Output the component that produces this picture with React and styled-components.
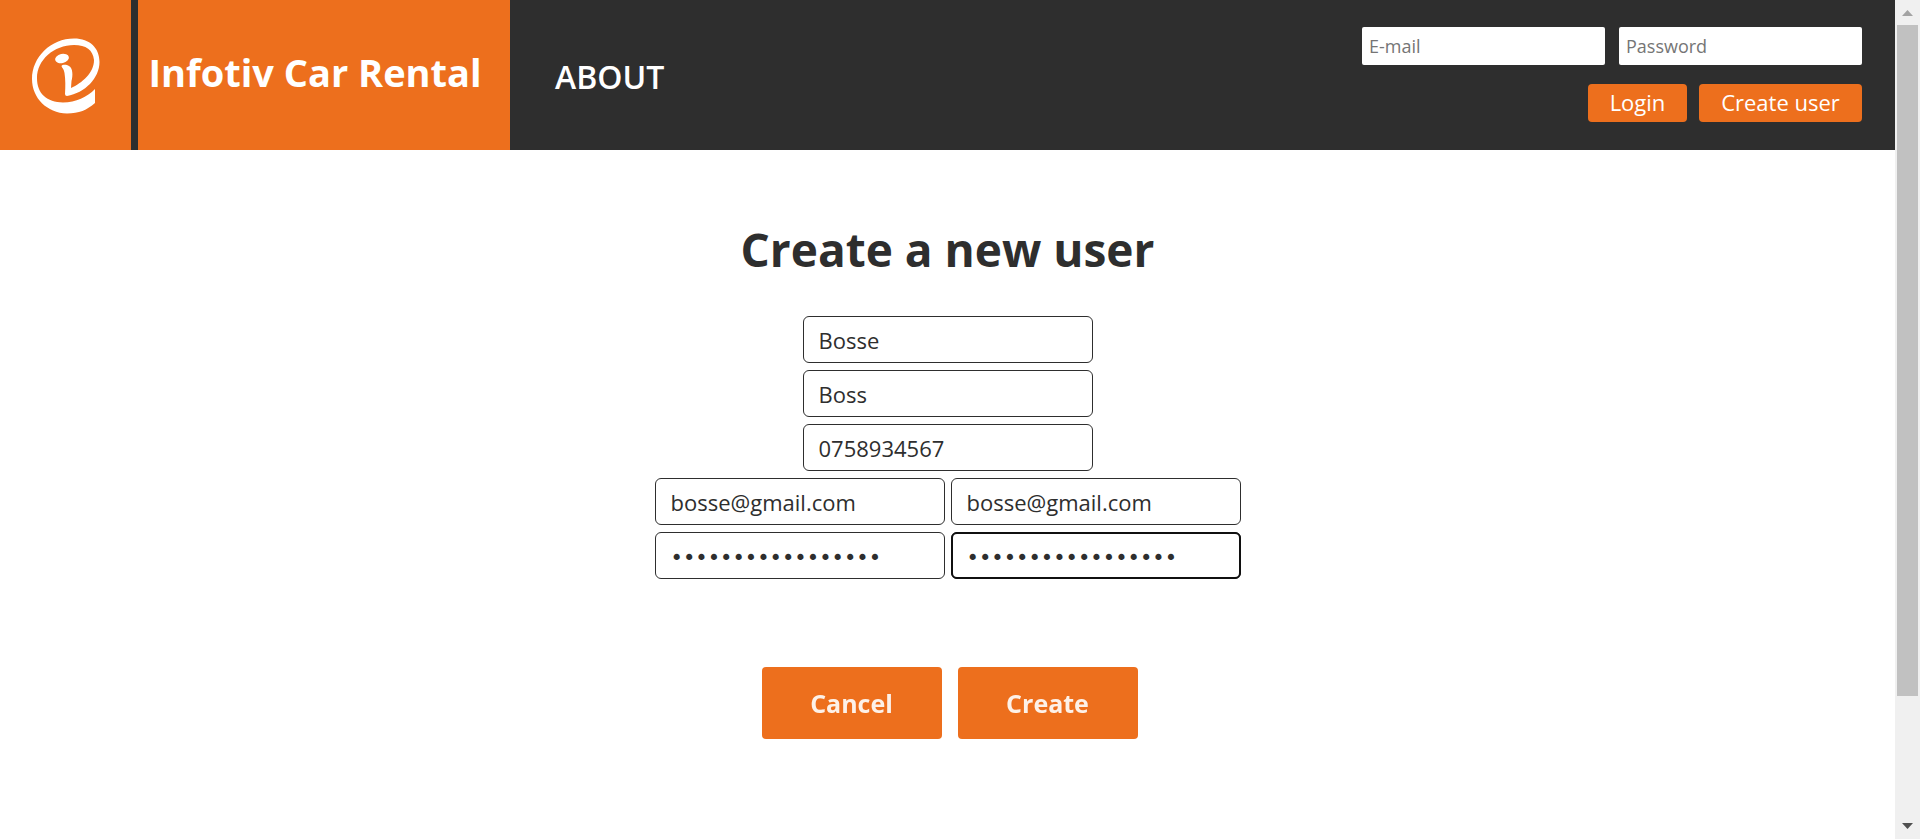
import React from "react";
import styled, { createGlobalStyle, css } from "styled-components";

const orange = "#ed6f1d";
const dark = "#2e2e2e";

const GlobalStyle = createGlobalStyle`
  *, *::before, *::after { box-sizing: border-box; }
  body {
    margin: 0;
    background: #fff;
    color: ${dark};
    font-family: "Trebuchet MS", "Open Sans", sans-serif;
  }
  button, input { font-family: inherit; }
`;

const Shell = styled.div`
  display: flex;
  min-height: 100vh;
`;

const Page = styled.div`
  flex: 1;
  min-width: 0;
`;

const Header = styled.header`
  display: flex;
  align-items: stretch;
  min-height: 150px;
  background: ${dark};
  color: #fff;
`;

const LogoLink = styled.a`
  display: flex;
  width: 131px;
  margin-right: 7px;
  background: ${orange};
`;

const Brand = styled.h1`
  display: flex;
  align-items: center;
  justify-content: center;
  width: 372px;
  margin: 0;
  padding: 0 18px 6px 0;
  background: ${orange};
  font-size: 38px;
  font-weight: 700;
  line-height: 48px;
  white-space: nowrap;
`;

const NavLink = styled.a`
  align-self: center;
  margin-left: 45px;
  padding-top: 4px;
  color: #fff;
  font-size: 32px;
  font-weight: 600;
  line-height: 40px;
  text-decoration: none;
`;

const LoginForm = styled.form`
  display: flex;
  flex-direction: column;
  align-items: flex-end;
  gap: 19px;
  margin-left: auto;
  padding: 27px 33px 0 0;
`;

const FieldRow = styled.div`
  display: flex;
  gap: ${(p) => p.$gap}px;
`;

const LoginInput = styled.input`
  width: 243px;
  height: 38px;
  padding: 0 7px;
  border: 0;
  border-radius: 2px;
  font-size: 18px;
  &::placeholder { color: #757575; }
`;

const button = css`
  border: 0;
  border-radius: 4px;
  background: ${orange};
  cursor: pointer;
`;

const SmallButton = styled.button`
  ${button}
  width: ${(p) => p.$width}px;
  height: 38px;
  padding: 0 0 2px;
  color: #fff;
  font-size: 22px;
  font-weight: 500;
`;

const Main = styled.main`
  padding: 69px 0 99px;
`;

const Title = styled.h2`
  margin: 0 0 37px;
  font-size: 46px;
  font-weight: 700;
  line-height: 60px;
  text-align: center;
`;

const UserForm = styled.form`
  display: flex;
  flex-direction: column;
  align-items: center;
  gap: 7px;
`;

const TextInput = styled.input`
  width: 290px;
  height: 47px;
  padding: 0 15px;
  border: 1px solid ${dark};
  border-radius: 6px;
  background: #fff;
  color: ${dark};
  font-size: 22px;
  &[type="password"] {
    padding-top: 5px;
    font-family: "DejaVu Sans", sans-serif;
    font-size: 21px;
  }
  &:focus {
    outline: 2px solid #101010;
    outline-offset: -2px;
    caret-color: transparent;
  }
`;

const Actions = styled.div`
  display: flex;
  margin-top: 81px;
`;

const ActionButton = styled.button`
  ${button}
  width: 180px;
  height: 72px;
  margin: 0 6px 0 10px;
  color: #fdf1e8;
  font-size: 25px;
  font-weight: 700;
`;

const ScrollTrack = styled.div`
  display: flex;
  flex-direction: column;
  width: 25px;
  height: 100vh;
  padding: 0 2px;
  background: #f0f0f0;
`;

const ScrollArrow = styled.svg`
  flex: none;
  width: 21px;
  height: 25px;
`;

const ScrollRail = styled.div`
  flex: 1;
`;

const ScrollThumb = styled.div`
  height: 85%;
  background: #c1c1c1;
`;

function Logo() {
  return (
    <svg width="131" height="150" viewBox="0 0 131 150" aria-hidden="true">
      <g fill="#fff">
        <path d="M95 89V103C87 110 79 113.500 67 113.500C47 113 32 98 32 79C32 57 51 38.500 74 38.500C90 38.500 99.500 48 99.500 62C99.500 78 85 93 67 96Q65 96 65 94C65.500 86 65.500 80 64.500 73C64 69 62 68 61.500 66C63 64 67 65 69 66C73 68 73 76 71.500 81L71 88C82 83 94 73 94 60C93 50 86 45 74 45C54 45 37 60 37 78C37 94 47 102 63 102.500C76 102.500 87 97 95 89Z" />
        <ellipse cx="62" cy="58.500" rx="7" ry="4.500" transform="rotate(-12 62 58.500)" />
      </g>
    </svg>
  );
}

export default function App() {
  return (
    <Shell>
      <GlobalStyle />
      <Page>
        <Header>
          <LogoLink href="#" aria-label="Infotiv home"><Logo /></LogoLink>
          <Brand>Infotiv Car Rental</Brand>
          <NavLink href="#about">ABOUT</NavLink>
          <LoginForm onSubmit={(e) => e.preventDefault()}>
            <FieldRow $gap={14}>
              <LoginInput type="email" placeholder="E-mail" aria-label="E-mail" />
              <LoginInput type="password" placeholder="Password" aria-label="Password" />
            </FieldRow>
            <FieldRow $gap={12}>
              <SmallButton type="submit" $width={99}>Login</SmallButton>
              <SmallButton type="button" $width={163}>Create user</SmallButton>
            </FieldRow>
          </LoginForm>
        </Header>
        <Main>
          <Title>Create a new user</Title>
          <UserForm onSubmit={(e) => e.preventDefault()}>
            <TextInput aria-label="First name" defaultValue="Bosse" />
            <TextInput aria-label="Last name" defaultValue="Boss" />
            <TextInput type="tel" aria-label="Phone number" defaultValue="0758934567" />
            <FieldRow $gap={6}>
              <TextInput type="email" aria-label="E-mail address" defaultValue="bosse@gmail.com" />
              <TextInput type="email" aria-label="Confirm e-mail address" defaultValue="bosse@gmail.com" />
            </FieldRow>
            <FieldRow $gap={6}>
              <TextInput type="password" aria-label="New password" defaultValue="12345678901234567" />
              <TextInput type="password" aria-label="Confirm password" defaultValue="12345678901234567" autoFocus />
            </FieldRow>
            <Actions>
              <ActionButton type="button">Cancel</ActionButton>
              <ActionButton type="submit">Create</ActionButton>
            </Actions>
          </UserForm>
        </Main>
      </Page>
      <ScrollTrack aria-hidden="true">
        <ScrollArrow viewBox="0 0 21 25"><path d="M5 16L10.500 10L16 16Z" fill="#a3a3a3" /></ScrollArrow>
        <ScrollRail><ScrollThumb /></ScrollRail>
        <ScrollArrow viewBox="0 0 21 25"><path d="M5 9L10.500 15L16 9Z" fill="#505050" /></ScrollArrow>
      </ScrollTrack>
    </Shell>
  );
}
